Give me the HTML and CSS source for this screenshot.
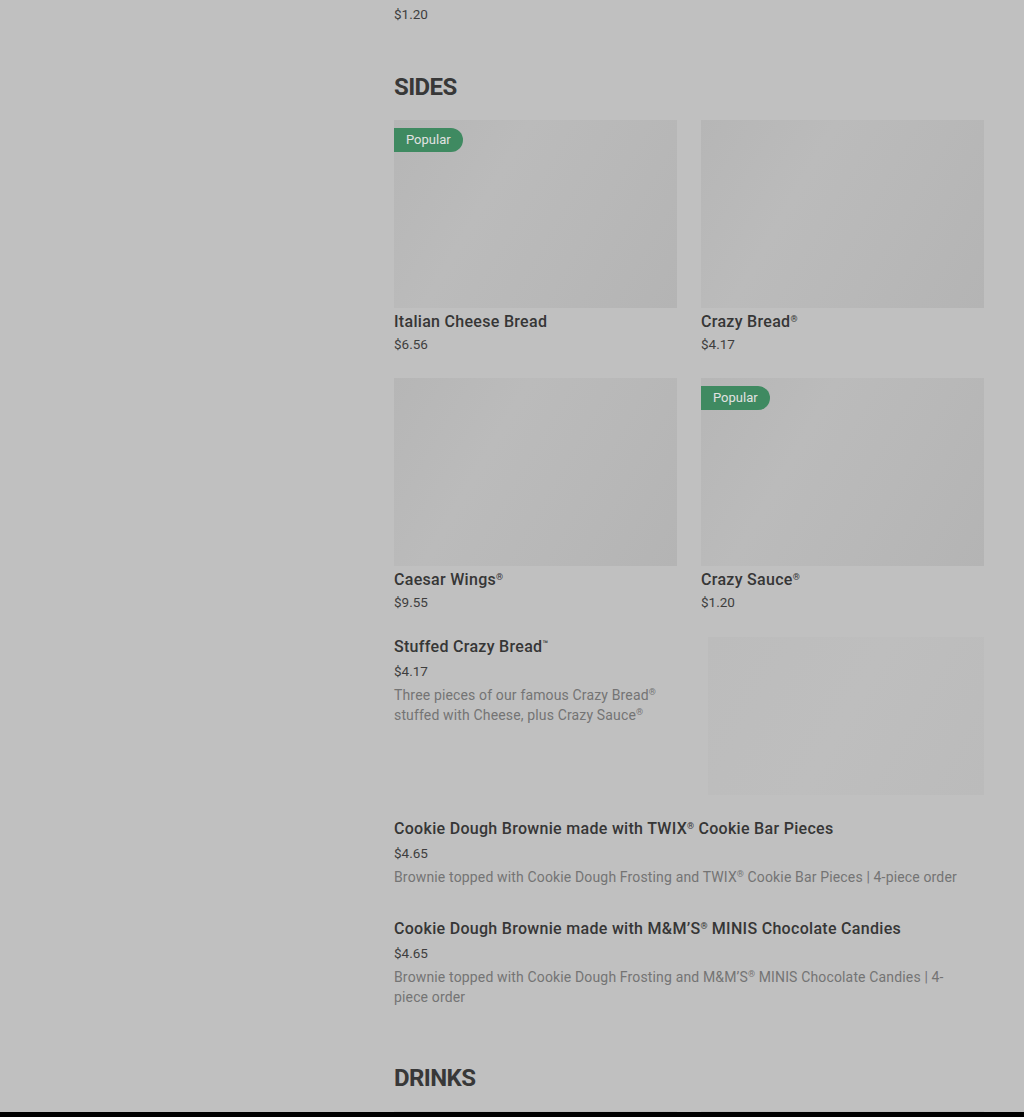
FILE: index.html
```html
<!DOCTYPE html>
<html lang="en">
<head>
    <meta charset="UTF-8">
    <meta name="viewport" content="width=device-width, initial-scale=1.0">
    <title>Little Caesars - Menu</title>
    <link rel="stylesheet" href="styles.css">
</head>
<body>
    <div class="page">
        <aside class="sidebar"></aside>
        <main class="menu">
            <section class="section section-cut">
                <div class="grid">
                    <div class="card card-noimage">
                        <h3 class="item-title">Ranch Dip</h3>
                        <p class="item-price">$1.20</p>
                    </div>
                </div>
            </section>

            <section class="section">
                <h2 class="section-title">SIDES</h2>
                <div class="grid">
                    <div class="card">
                        <div class="thumb">
                            <span class="badge">Popular</span>
                        </div>
                        <h3 class="item-title">Italian Cheese Bread</h3>
                        <p class="item-price">$6.56</p>
                    </div>
                    <div class="card">
                        <div class="thumb"></div>
                        <h3 class="item-title">Crazy Bread<span class="mark">®</span></h3>
                        <p class="item-price">$4.17</p>
                    </div>
                    <div class="card">
                        <div class="thumb"></div>
                        <h3 class="item-title">Caesar Wings<span class="mark">®</span></h3>
                        <p class="item-price">$9.55</p>
                    </div>
                    <div class="card">
                        <div class="thumb">
                            <span class="badge">Popular</span>
                        </div>
                        <h3 class="item-title">Crazy Sauce<span class="mark">®</span></h3>
                        <p class="item-price">$1.20</p>
                    </div>
                </div>

                <div class="list">
                    <div class="row">
                        <div class="row-text">
                            <h3 class="item-title">Stuffed Crazy Bread<span class="mark">™</span></h3>
                            <p class="item-price">$4.17</p>
                            <p class="item-desc">Three pieces of our famous Crazy Bread<span class="mark">®</span> stuffed with Cheese, plus Crazy Sauce<span class="mark">®</span></p>
                        </div>
                        <div class="row-thumb"></div>
                    </div>
                    <div class="row">
                        <div class="row-text">
                            <h3 class="item-title">Cookie Dough Brownie made with TWIX<span class="mark">®</span> Cookie Bar Pieces</h3>
                            <p class="item-price">$4.65</p>
                            <p class="item-desc">Brownie topped with Cookie Dough Frosting and TWIX<span class="mark">®</span> Cookie Bar Pieces | 4-piece order</p>
                        </div>
                    </div>
                    <div class="row">
                        <div class="row-text">
                            <h3 class="item-title">Cookie Dough Brownie made with M&amp;M’S<span class="mark">®</span> MINIS Chocolate Candies</h3>
                            <p class="item-price">$4.65</p>
                            <p class="item-desc">Brownie topped with Cookie Dough Frosting and M&amp;M’S<span class="mark">®</span> MINIS Chocolate Candies | 4-piece order</p>
                        </div>
                    </div>
                </div>
            </section>

            <section class="section">
                <h2 class="section-title">DRINKS</h2>
                <div class="grid">
                    <div class="card">
                        <div class="thumb"></div>
                    </div>
                    <div class="card">
                        <div class="thumb"></div>
                    </div>
                </div>
            </section>
        </main>
    </div>
    <div class="sheet-edge"></div>
</body>
</html>
```

FILE: styles.css
```css
body {
    background-color: #c0c0c0;
    color: #2f2f2f;
    font-family: Roboto, "Liberation Sans", sans-serif;
    margin: 0;
    overflow: hidden;
    height: 1117px;
}
.page {
    display: flex;
    margin-top: -22px;
}
.sidebar {
    width: 394px;
    flex-shrink: 0;
}
.menu {
    width: 590px;
}
.section + .section {
    margin-top: 48px;
}
.section-title {
    font-size: 24px;
    line-height: 30px;
    font-weight: 700;
    letter-spacing: -0.6px;
    color: #383838;
    margin: 0 0 18px;
}
.grid {
    display: grid;
    grid-template-columns: 1fr 1fr;
    column-gap: 24px;
    row-gap: 24px;
}
.thumb {
    position: relative;
    height: 188px;
    background: linear-gradient(120deg, #b6b6b6 0%, #bbbbbb 35%, #b8b8b8 65%, #b4b4b4 100%);
}
.badge {
    position: absolute;
    top: 8px;
    left: 0;
    height: 24px;
    line-height: 24px;
    padding: 0 12px;
    background: #3f8a61;
    color: #e2e2e2;
    font-size: 13px;
    border-radius: 0 12px 12px 0;
}
.item-title {
    font-size: 16px;
    line-height: 24px;
    font-weight: 500;
    letter-spacing: 0.3px;
    color: #363636;
    margin: 2px 0 0;
}
.mark {
    position: relative;
    top: -5px;
    font-size: 9px;
    line-height: 0;
    letter-spacing: 0;
}
.item-price {
    font-size: 13.5px;
    line-height: 20px;
    color: #3e3e3e;
    margin: 0;
}
.list {
    display: flex;
    flex-direction: column;
    gap: 24px;
    margin: 25px 0 1px;
}
.row {
    display: flex;
    justify-content: space-between;
    gap: 24px;
}
.row-text {
    max-width: 572px;
    padding-bottom: 8px;
}
.row .item-title {
    line-height: 20px;
    margin: 0 0 4px;
}
.row .item-price {
    margin-bottom: 4px;
}
.item-desc {
    font-size: 14px;
    line-height: 20px;
    letter-spacing: 0.15px;
    color: #747474;
    margin: 0;
}
.row-thumb {
    width: 276px;
    height: 158px;
    flex-shrink: 0;
    background: linear-gradient(120deg, #bcbcbc 0%, #bebebe 50%, #bbbbbb 100%);
}
.sheet-edge {
    position: fixed;
    left: 0;
    right: 0;
    bottom: 0;
    height: 5px;
    background: #000000;
}
```
